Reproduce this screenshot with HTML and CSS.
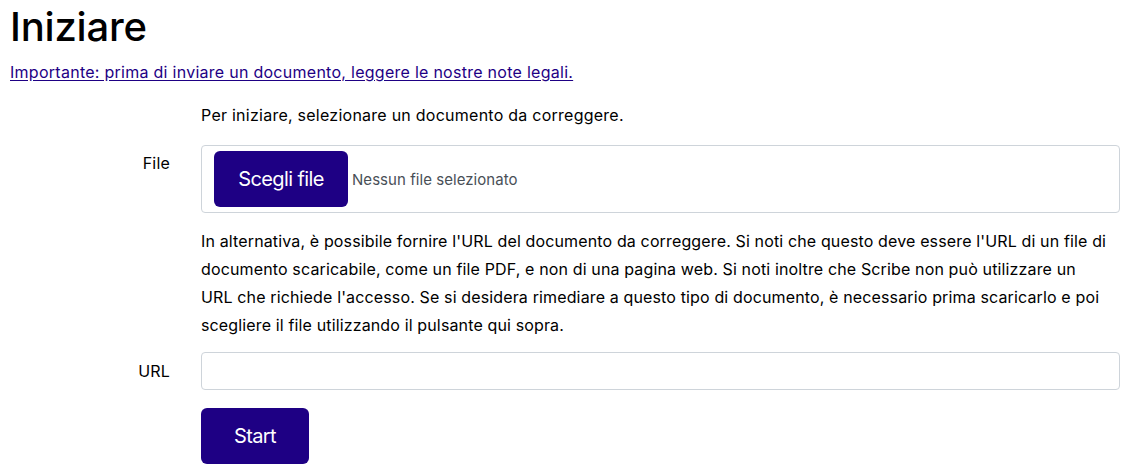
FILE: index.html
```html
<!DOCTYPE html>
<html lang="it">
<head>
<meta charset="utf-8">
<title>Iniziare</title>
<link rel="stylesheet" href="styles.css">
</head>
<body>
<h1 class="title">Iniziare</h1>
<a class="legal" href="#">Importante: prima di inviare un documento, leggere le nostre note legali.</a>
<form class="form">
  <div class="spacer"></div>
  <p class="intro">Per iniziare, selezionare un documento da correggere.</p>

  <label class="label label-top">File</label>
  <div class="file-box">
    <span class="btn btn-file">Scegli file</span>
    <span class="file-none">Nessun file selezionato</span>
  </div>

  <div class="spacer"></div>
  <p class="note">In alternativa, è possibile fornire l'URL del documento da correggere. Si noti che questo deve essere l'URL di un file di<br>documento scaricabile, come un file PDF, e non di una pagina web. Si noti inoltre che Scribe non può utilizzare un<br>URL che richiede l'accesso. Se si desidera rimediare a questo tipo di documento, è necessario prima scaricarlo e poi<br>scegliere il file utilizzando il pulsante qui sopra.</p>

  <label class="label label-mid">URL</label>
  <input class="url-input" type="text">

  <div class="spacer"></div>
  <div><button class="btn btn-start" type="button">Start</button></div>
</form>
</body>
</html>
```
FILE: styles.css
```css
html, body {
  margin: 0;
  padding: 0;
  background: #ffffff;
}
body {
  font-family: Inter, "Noto Sans", sans-serif;
  font-size: 16px;
  color: #000;
  padding: 3px 18px 0 10px;
}
.title {
  font-size: 40px;
  font-weight: 500;
  line-height: 48px;
  margin: 0 0 9px 0;
  letter-spacing: -0.2px;
}
.legal {
  display: block;
  color: #1e0084;
  line-height: 24px;
  letter-spacing: 0.27px;
  text-decoration: underline;
  text-underline-offset: 2px;
}
.form {
  display: grid;
  grid-template-columns: 160px 1fr;
  column-gap: 31px;
  margin-top: 19px;
}
.intro {
  margin: 0 0 18px 0;
  line-height: 24px;
  letter-spacing: 0.25px;
}
.label {
  text-align: right;
  line-height: 24px;
  letter-spacing: 0.2px;
}
.label-top {
  padding-top: 6px;
}
.label-mid {
  align-self: center;
}
.file-box {
  display: flex;
  align-items: center;
  gap: 4px;
  height: 68px;
  box-sizing: border-box;
  border: 1px solid #ced4da;
  border-radius: 4px;
  padding: 0 12px;
}
.btn {
  display: inline-flex;
  align-items: center;
  justify-content: center;
  background: #1e0084;
  color: #fff;
  font-family: Inter, "Noto Sans", sans-serif;
  font-size: 20px;
  letter-spacing: -0.6px;
  border: none;
  border-radius: 6px;
  height: 56px;
}
.btn-file {
  width: 134px;
}
.file-none {
  color: #495057;
  font-size: 15px;
  letter-spacing: 0.05px;
}
.note {
  margin: 14px 0 13px 0;
  line-height: 28px;
  letter-spacing: 0.14px;
  white-space: nowrap;
}
.url-input {
  height: 38px;
  box-sizing: border-box;
  border: 1px solid #ced4da;
  border-radius: 4px;
  font-size: 16px;
  padding: 6px 12px;
  width: 100%;
}
.btn-start {
  width: 108px;
  margin-top: 18px;
}
```
